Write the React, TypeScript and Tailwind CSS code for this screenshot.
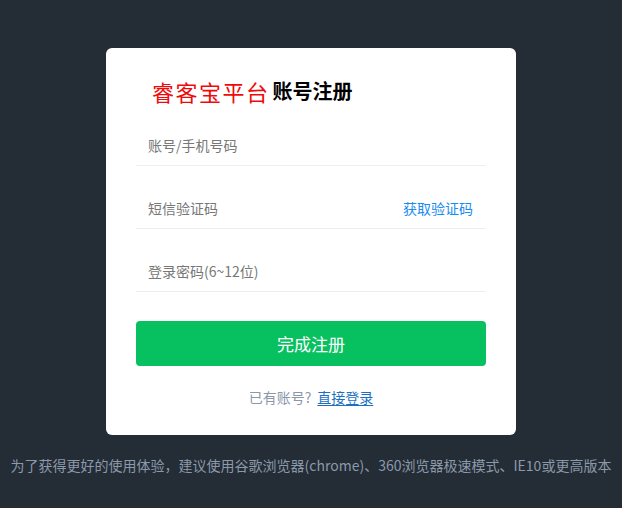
import React from 'react';

const font = { fontFamily: '"Noto Sans CJK SC", "Noto Sans", sans-serif' };

const Field: React.FC<{ placeholder: string; type?: string; action?: string }> = ({ placeholder, type = 'text', action }) => (
  <div className="flex items-center h-[42px] border-b border-[#eeeeee] mb-[21px] last:mb-0">
    <input
      type={type}
      placeholder={placeholder}
      className="flex-1 min-w-0 h-full pl-3 text-sm text-[#333] placeholder:text-[#777] outline-none bg-transparent"
    />
    {action && <span className="text-sm text-[#1a8cf0] pr-[13px] cursor-pointer">{action}</span>}
  </div>
);

export default function App() {
  return (
    <div className="min-h-[508px] w-full bg-[#242c36] pt-[48px] pb-8" style={font}>
      <div className="w-[410px] mx-auto bg-white rounded-md px-[30px] pt-[28px] pb-[28px]">
        <div className="h-[30px] flex items-center pl-[16px] mb-[18px]">
          <span className="text-[22px] leading-none text-[#ee0a0a] tracking-[1.5px]">睿客宝平台</span>
          <span className="text-[20px] leading-none font-bold text-black ml-[3px]">账号注册</span>
        </div>

        <div className="flex flex-col">
          <Field placeholder="账号/手机号码" />
          <Field placeholder="短信验证码" action="获取验证码" />
          <Field placeholder="登录密码(6~12位)" type="password" />
        </div>

        <button className="mt-[29px] w-full h-[45px] rounded bg-[#07c160] text-white text-[17px]">
          完成注册
        </button>

        <div className="mt-[21px] h-5 flex items-center justify-center text-sm leading-5">
          <span className="text-[#8a97a8]">已有账号?</span>
          <a className="ml-[6px] text-[#1b70c4] underline underline-offset-2 cursor-pointer">直接登录</a>
        </div>
      </div>

      <p className="mt-5 text-center text-sm leading-5 text-[#8b99aa]">
        为了获得更好的使用体验，建议使用谷歌浏览器(chrome)、360浏览器极速模式、IE10或更高版本
      </p>
    </div>
  );
}
